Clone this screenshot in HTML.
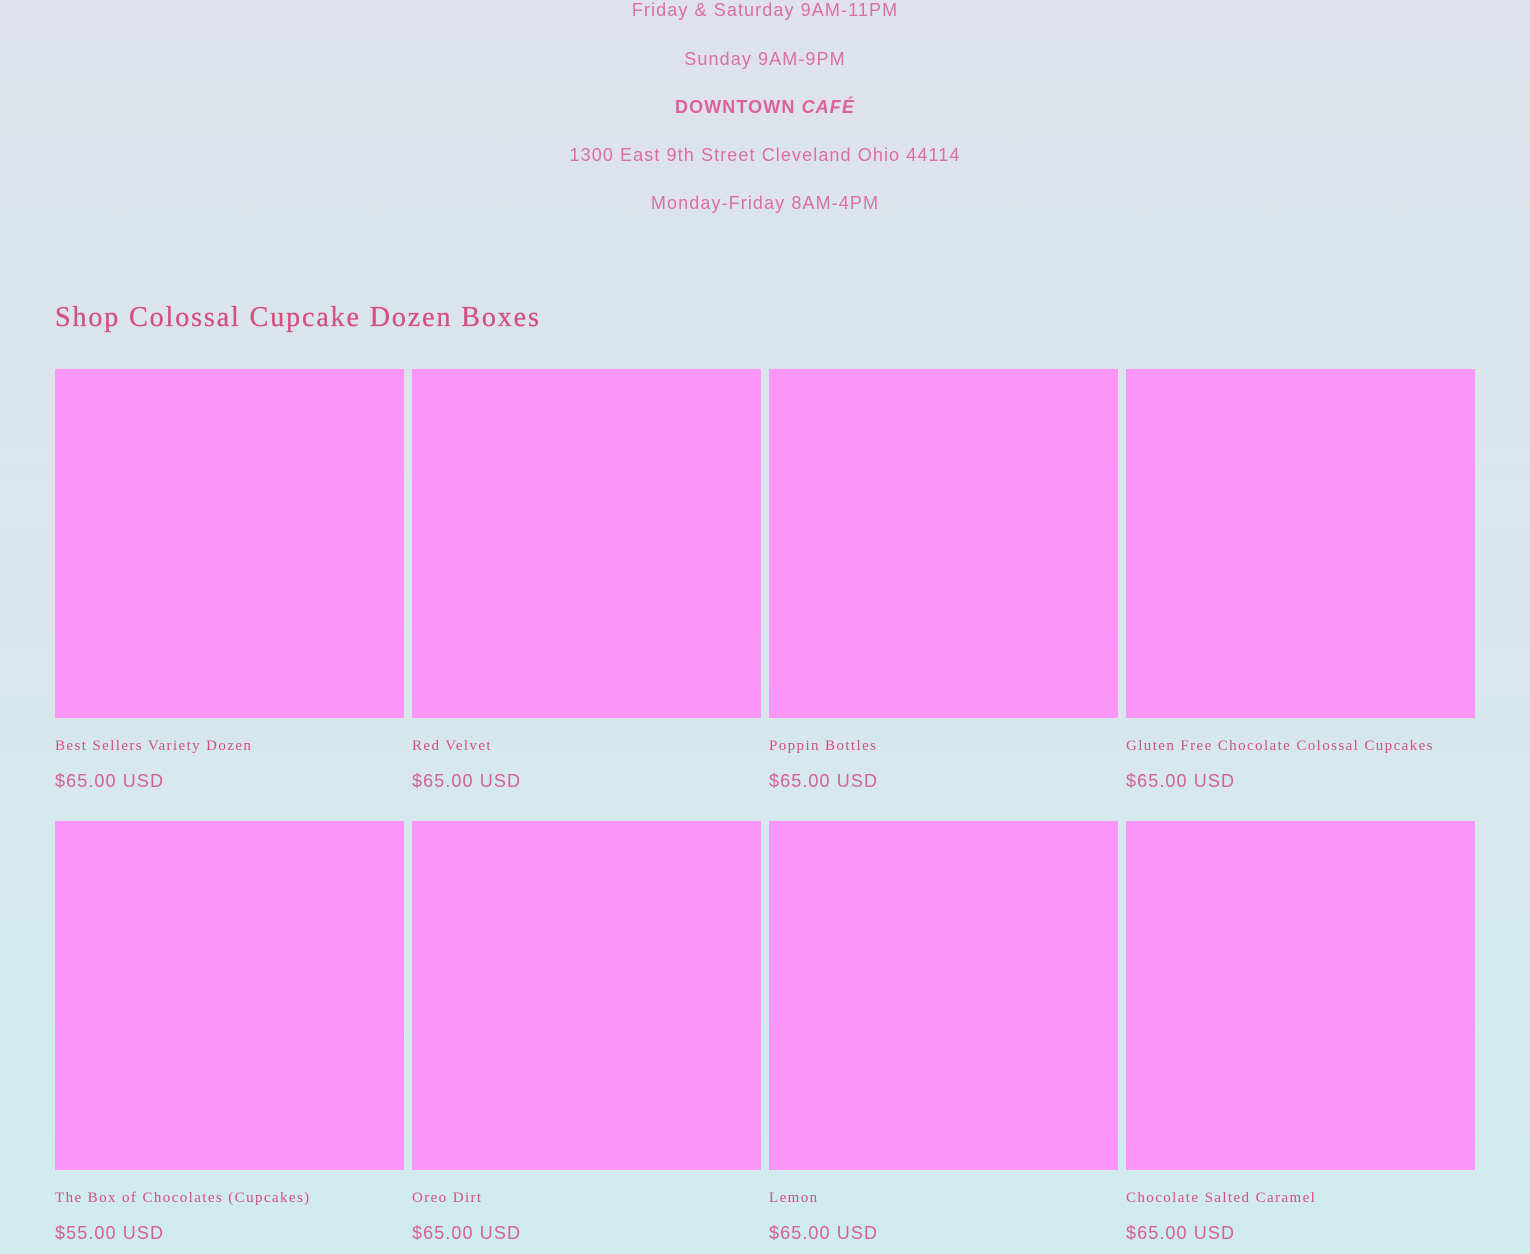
<!DOCTYPE html><html><head><style>
body{margin:0;width:1530px;height:1254px;overflow:hidden;background:linear-gradient(#dfe2ea,#d0ebee);font-family:"Liberation Sans",sans-serif;position:relative}
.c{position:absolute;left:0;width:1530px;text-align:center;color:#db6fa0;font-size:18px;letter-spacing:1.1px}
h2{position:absolute;left:55px;top:302px;margin:0;font:28px "Liberation Serif",serif;color:#d4507f;letter-spacing:1.9px;-webkit-text-stroke:.3px #d4507f}
.card{position:absolute;width:349px}
.img{width:349px;height:349px;background:#fd95f8}
.t{font:15px "Liberation Serif",serif;color:#d4507f;margin-top:20px;letter-spacing:1.4px;white-space:nowrap}
.p{font-size:18px;color:#d4609a;margin-top:16px;letter-spacing:1.1px}
</style></head><body>
<div class="c" style="top:0px">Friday &amp; Saturday 9AM-11PM</div>
<div class="c" style="top:49px">Sunday 9AM-9PM</div>
<div class="c" style="top:97px;font-weight:bold;color:#dc6399">DOWNTOWN <i>CAFÉ</i></div>
<div class="c" style="top:145px">1300 East 9th Street Cleveland Ohio 44114</div>
<div class="c" style="top:193px">Monday-Friday 8AM-4PM</div>
<h2>Shop Colossal Cupcake Dozen Boxes</h2>
<div class="card" style="left:55px;top:369px"><div class="img"></div><div class="t">Best Sellers Variety Dozen</div><div class="p">$65.00 USD</div></div>
<div class="card" style="left:412px;top:369px"><div class="img"></div><div class="t">Red Velvet</div><div class="p">$65.00 USD</div></div>
<div class="card" style="left:769px;top:369px"><div class="img"></div><div class="t">Poppin Bottles</div><div class="p">$65.00 USD</div></div>
<div class="card" style="left:1126px;top:369px"><div class="img"></div><div class="t">Gluten Free Chocolate Colossal Cupcakes</div><div class="p">$65.00 USD</div></div>
<div class="card" style="left:55px;top:821px"><div class="img"></div><div class="t">The Box of Chocolates (Cupcakes)</div><div class="p">$55.00 USD</div></div>
<div class="card" style="left:412px;top:821px"><div class="img"></div><div class="t">Oreo Dirt</div><div class="p">$65.00 USD</div></div>
<div class="card" style="left:769px;top:821px"><div class="img"></div><div class="t">Lemon</div><div class="p">$65.00 USD</div></div>
<div class="card" style="left:1126px;top:821px"><div class="img"></div><div class="t">Chocolate Salted Caramel</div><div class="p">$65.00 USD</div></div>
</body></html>
